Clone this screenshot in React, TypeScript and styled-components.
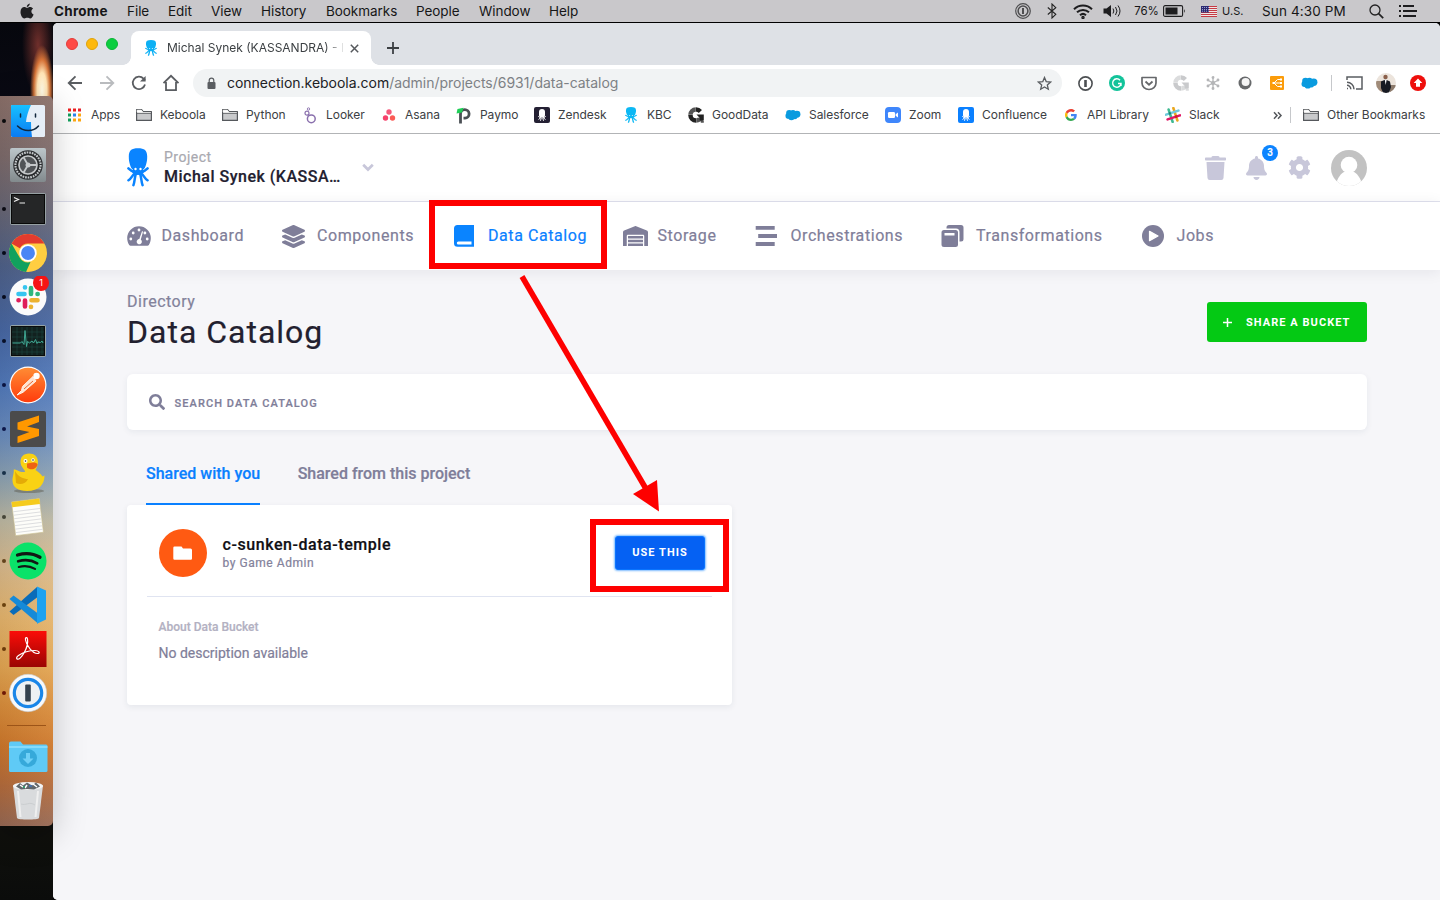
import React from 'react';
import styled, { createGlobalStyle } from 'styled-components';
import { FaLayerGroup, FaWarehouse, FaTrash, FaBell, FaCog, FaSearch } from 'react-icons/fa';

const UI = `Inter, "Liberation Sans", sans-serif`;
const APP = `Roboto, "Liberation Sans", sans-serif`;

const Global = createGlobalStyle`
  * { box-sizing: border-box; }
  html, body { margin: 0; padding: 0; overflow: hidden; }
  svg { display: block; flex: none; }
`;

const Desktop = styled.div`
  position: relative;
  width: 1440px;
  height: 900px;
  overflow: hidden;
  display: flex;
  flex-direction: column;
  background: #050507;
  font-family: ${APP};
`;

/* ---------- macOS menu bar ---------- */
const MenuBar = styled.div`
  height: 23px;
  display: flex;
  justify-content: space-between;
  background: #c9c8cb;
  border-bottom: 1px solid #000;
  font: 400 13.5px/22px ${UI};
  color: #161617;
`;
const MenuGroup = styled.div`
  display: flex;
  align-items: center;
  height: 22px;
`;
const MenuItem = styled.div<{ $w: number; $bold?: boolean; $ls?: number; $size?: number }>`
  width: ${p => p.$w}px;
  flex: none;
  white-space: nowrap;
  font-weight: ${p => (p.$bold ? 700 : 400)};
  letter-spacing: ${p => p.$ls ?? -0.05}px;
  font-size: ${p => p.$size ?? 13.5}px;
`;

/* ---------- Below the menu bar ---------- */
const Workspace = styled.div`
  flex: 1;
  min-height: 0;
  display: flex;
`;
const DockColumn = styled.div`
  width: 53px;
  flex: none;
  position: relative;
  z-index: 2;
  padding-top: 73px;
  background:
    radial-gradient(ellipse 12px 46px at 42px 68px, #fffbe8 0%, #ffe3b4 40%, rgba(240,130,60,.85) 68%, rgba(110,30,16,0) 100%),
    radial-gradient(ellipse 16px 50px at 38px 22px, rgba(130,54,48,.85) 0%, rgba(50,16,20,0) 100%),
    linear-gradient(#06070d 0, #0a0a14 90px, #14100c 700px, #0e0f0c 830px, #0b0c0b 100%);
`;
const Dock = styled.div`
  height: 730px;
  padding: 3px 0;
  border-radius: 0 5px 5px 0;
  background:
    linear-gradient(90deg, rgba(0,0,0,.06), rgba(255,255,255,.05)),
    linear-gradient(#8b7069 0, #7c6a6a 60px, #666574 115px, #4e6088 170px, #4767a3 235px, #5179ba 290px, #6a8cbd 340px,
      #8fa3b0 385px, #bcb7a1 425px, #d8b98c 470px, #e4b46d 520px, #e2a552 570px, #d98d3b 610px, #cd772b 650px, #b36b3c 690px, #966853 730px);
  box-shadow: 0 8px 34px rgba(0, 0, 0, 0.22);
`;
const DockSlot = styled.div`
  height: 44px;
  display: flex;
  align-items: center;
  gap: 3px;
  padding-left: 2px;
`;
const RunDot = styled.span<{ $c?: string }>`
  width: 4px;
  height: 4px;
  border-radius: 2px;
  background: ${p => p.$c ?? 'transparent'};
  flex: none;
`;
const DockDivider = styled.div`
  height: 20px;
  padding: 9.5px 7px 0;
  &::before { content: ''; display: block; height: 1px; background: #9c5418; }
`;

/* ---------- Browser window ---------- */
const Win = styled.div`
  flex: 1;
  min-width: 0;
  display: flex;
  flex-direction: column;
  border-radius: 5px 5px 0 5px;
  overflow: hidden;
  background: #fff;
`;
const TabStrip = styled.div`
  height: 42px;
  flex: none;
  display: flex;
  background: #dee1e6;
`;
const Lights = styled.div`
  width: 78px;
  display: flex;
  gap: 8px;
  padding: 15px 0 0 13px;
`;
const Light = styled.span<{ $c: string; $b: string }>`
  width: 12px;
  height: 12px;
  border-radius: 50%;
  background: ${p => p.$c};
  border: 1px solid ${p => p.$b};
`;
const Tab = styled.div`
  position: relative;
  width: 240px;
  height: 34px;
  margin-top: 8px;
  padding-left: 14px;
  display: flex;
  align-items: center;
  background: #fff;
  border-radius: 8px 8px 0 0;
  &::before, &::after {
    content: '';
    position: absolute;
    bottom: 0;
    width: 8px;
    height: 8px;
  }
  &::before { left: -8px; background: radial-gradient(circle at 0 0, transparent 7.5px, #fff 8px); }
  &::after { right: -8px; background: radial-gradient(circle at 100% 0, transparent 7.5px, #fff 8px); }
`;
const TabTitle = styled.div`
  width: 176px;
  margin-left: 10px;
  overflow: hidden;
  white-space: nowrap;
  font: 400 12px/16px ${UI};
  color: #3c4043;
  mask-image: linear-gradient(90deg, #000 158px, rgba(0, 0, 0, 0.15) 176px);
`;
const NewTab = styled.div`
  padding: 19px 0 0 16px;
`;
const Toolbar = styled.div`
  height: 36px;
  flex: none;
  display: flex;
  align-items: center;
`;
const IconSlot = styled.div<{ $w: number }>`
  width: ${p => p.$w}px;
  flex: none;
  display: flex;
  align-items: center;
  justify-content: center;
`;
const Omnibox = styled.div`
  width: 869px;
  height: 28px;
  flex: none;
  padding: 0 10px 0 12px;
  display: flex;
  align-items: center;
  border-radius: 14px;
  background: #f1f3f4;
  font: 400 14px/28px ${UI};
  letter-spacing: -0.02px;
  color: #202124;
`;
const Url = styled.div`
  flex: 1;
  margin-left: 9px;
  white-space: nowrap;
  span { color: #7d8185; }
`;
const BarRule = styled.span`
  width: 1px;
  height: 16px;
  background: #c6c8cb;
`;
const Bookmarks = styled.div`
  height: 33px;
  flex: none;
  display: flex;
  padding-left: 14px;
  border-bottom: 1px solid #b2b4b6;
`;
const Bookmark = styled.div<{ $w: number }>`
  width: ${p => p.$w}px;
  height: 28px;
  flex: none;
  display: flex;
  align-items: center;
  gap: 8px;
  white-space: nowrap;
  font: 400 12px/16px ${UI};
  letter-spacing: -0.04px;
  color: #3c4043;
`;

/* ---------- Web application ---------- */
const Page = styled.div`
  flex: 1;
  min-height: 0;
  background: #f6f6f9;
  -webkit-text-stroke: 0.2px;
`;
const ProjectBar = styled.div`
  height: 68px;
  padding: 0 73px 0 74px;
  display: flex;
  align-items: center;
  background: #fff;
  border-bottom: 1px solid #e1e2ee;
`;
const ProjectName = styled.div`
  width: 198px;
  margin-left: 15px;
  letter-spacing: 0.5px;
  color: #22202f;
  font: 500 16px/20px ${APP};
  small { display: block; margin-top: -1px; padding-bottom: 1px; font: 400 14px/18px ${APP}; color: #a9a9b0; }
`;
const Tools = styled.div`
  margin-left: auto;
  display: flex;
  align-items: center;
  color: #c8c7da;
`;
const BellWrap = styled.div`
  position: relative;
  margin: 0 21px 0 20px;
`;
const Badge = styled.span`
  position: absolute;
  left: 16px;
  top: -11px;
  width: 16px;
  height: 16px;
  border-radius: 8px;
  background: #0c84ff;
  color: #fff;
  text-align: center;
  font: 500 10px/16px ${APP};
`;
const Nav = styled.div`
  position: relative;
  height: 68px;
  padding-left: 74px;
  display: flex;
  align-items: center;
  background: #fff;
  box-shadow: 0 2px 14px rgba(20, 20, 50, 0.08);
`;
const NavItem = styled.div<{ $w: number; $icon: number; $active?: boolean }>`
  width: ${p => p.$w}px;
  flex: none;
  display: flex;
  align-items: center;
  white-space: nowrap;
  font: 400 16px/20px ${APP};
  letter-spacing: 0.57px;
  color: ${p => (p.$active ? '#0a80ff' : '#7f7e99')};
  span { width: ${p => p.$icon}px; flex: none; }
`;
const Content = styled.div`
  padding: 22px 73px 0 74px;
`;
const TitleRow = styled.div`
  height: 82px;
  display: flex;
  justify-content: space-between;
`;
const Crumb = styled.div`
  font: 400 16px/20px ${APP};
  letter-spacing: 0.5px;
  color: #83829b;
`;
const Title = styled.h1`
  margin: 1px 0 0;
  font: 400 32px/38px ${APP};
  letter-spacing: 1px;
  color: #22202f;
`;
const ShareButton = styled.button`
  width: 160px;
  height: 40px;
  margin-top: 10px;
  padding: 0 0 0 16px;
  display: flex;
  align-items: center;
  gap: 14px;
  border: 0;
  border-radius: 3px;
  background: #04c914;
  color: #fff;
  font: 700 11px/16px ${APP};
  letter-spacing: 1.05px;
  white-space: nowrap;
  -webkit-text-stroke: 0;
  span { padding-top: 1px; }
`;
const SearchBox = styled.div`
  height: 56px;
  padding-left: 22px;
  display: flex;
  align-items: center;
  gap: 9.5px;
  border-radius: 6px;
  background: #fff;
  box-shadow: 0 2px 6px rgba(30, 50, 80, 0.07);
  color: #7f7e99;
  font: 500 11px/18px ${APP};
  letter-spacing: 1.08px;
  span { padding-top: 3px; }
`;
const Tabs = styled.div`
  height: 75px;
  padding-left: 19px;
  display: flex;
  align-items: flex-end;
  gap: 37.5px;
`;
const PageTab = styled.div<{ $active?: boolean }>`
  height: 43px;
  font: 500 16px/23px ${APP};
  color: ${p => (p.$active ? '#0a80ff' : '#7f7e99')};
  border-bottom: 2px solid ${p => (p.$active ? '#0a80ff' : 'transparent')};
`;
const Card = styled.div`
  width: 605px;
  height: 200px;
  padding: 0 20px;
  border-radius: 4px;
  background: #fff;
  box-shadow: 0 2px 6px rgba(30, 50, 80, 0.08);
`;
const CardHead = styled.div`
  height: 92px;
  padding: 4px 7px 0 12px;
  display: flex;
  align-items: center;
  border-bottom: 1px solid #e0e4f1;
`;
const BucketIcon = styled.div`
  width: 48px;
  height: 48px;
  border-radius: 24px;
  display: flex;
  align-items: center;
  justify-content: center;
  background: #ff5a12;
`;
const BucketName = styled.div`
  flex: 1;
  margin-left: 15.5px;
  font: 500 16px/20px ${APP};
  letter-spacing: 0.56px;
  color: #111014;
  small { display: block; font: 400 12px/16px ${APP}; letter-spacing: 0.55px; color: #83829b; }
`;
const UseButton = styled.button`
  width: 90px;
  height: 34px;
  padding: 1px 0 0;
  border: 1px solid #0a74ff;
  border-radius: 3px;
  background: #0561f3;
  box-shadow: 0 0 2px 1px #7ebcff;
  color: #fff;
  font: 700 11px/16px ${APP};
  letter-spacing: 1.05px;
  -webkit-text-stroke: 0;
`;
const About = styled.div`
  padding: 21px 12px 21px 11.5px;
  font: 500 12px/18px ${APP};
  color: #b3b1c2;
  p { margin: 8px 0 0; font: 400 14px/19px ${APP}; color: #7f7e99; }
`;

/* ---------- Annotations lying over the window ---------- */
const Highlight = styled.div<{ $x: number; $y: number; $w: number; $h: number }>`
  position: absolute;
  z-index: 4;
  left: ${p => p.$x}px;
  top: ${p => p.$y}px;
  width: ${p => p.$w}px;
  height: ${p => p.$h}px;
  border: 6px solid #fe0000;
`;
const ArrowLayer = styled.svg`
  position: absolute;
  z-index: 4;
  left: 510px;
  top: 270px;
`;

/* ---------- Drawings ---------- */
const Octopus = ({ w, h, color, eye = '#fff' }: { w: number; h: number; color: string; eye?: string }) => (
  <svg width={w} height={h} viewBox="0 0 22 39" preserveAspectRatio="none">
    <path d="M1.800 8.500C1.800 2.500 4.500.3 11 .3s9.200 2.200 9.200 8.200c0 3.500-.4 5.500-1.200 8.300-.7 2.700-1.700 4.200-3.200 5.200H6.200c-1.500-1-2.500-2.500-3.200-5.200C2.200 14 1.800 12 1.800 8.500Z" fill={color} />
    <ellipse cx="11" cy="23.500" rx="6" ry="3.600" fill={color} />
    <g stroke={color} strokeWidth="2.500" fill="none" strokeLinecap="round">
      <path d="M1.400 20.300C3 22 5 23.500 8 24M20.600 20.300C19 22 17 23.500 14 24" />
      <path d="M1.400 32.300C4.500 31 4.500 27.500 8 25.500M20.600 32.300C17.500 31 17.500 27.500 14 25.500" />
      <path d="M6.400 37.200C7.800 34 7.500 29 9 25.500M15.600 37.200C14.200 34 14.500 29 13 25.500" />
    </g>
    <circle cx="8.500" cy="21" r="1.200" fill={eye} /><circle cx="13.500" cy="21" r="1.200" fill={eye} />
  </svg>
);
const OctoTile = ({ bg }: { bg: string }) => (
  <svg width="16" height="16" viewBox="0 0 16 16">
    <rect width="16" height="16" rx="2" fill={bg} />
    <path d="M5 5c0-2 1-3 3-3s3 1 3 3v3c0 1-.5 2-1 2.500H6C5.500 10 5 9 5 8Z" fill="#fff" />
    <path d="M4.300 9.300c1 1.500 2 1.200 3 1.200M11.700 9.300c-1 1.500-2 1.200-3 1.200M4.500 12.500l2.500-2M11.500 12.500l-2.500-2M6.500 13.800l.8-3M9.500 13.800l-.8-3" stroke="#fff" fill="none" />
  </svg>
);
const Gauge = () => (
  <svg width="24" height="20" viewBox="0 0 24 20">
    <path d="M12 .3A11.800 11.800 0 0 0 .2 12c0 2.600.7 5 2 7 .3.500.8.700 1.300.700h17c.5 0 1-.2 1.300-.700 1.300-2 2-4.400 2-7A11.800 11.800 0 0 0 12 .3Z" fill="#7f7e99" />
    <g fill="#fff"><circle cx="3.800" cy="13" r="1.400" /><circle cx="6.200" cy="7" r="1.400" /><circle cx="12" cy="4" r="1.400" /><circle cx="17.900" cy="7" r="1.400" /><circle cx="20.200" cy="13" r="1.400" /><path d="M15 5.200l1.100.4-2.300 8a2.600 2.600 0 1 1-1.500-.5Z" /></g>
  </svg>
);
const Folder = () => (
  <svg width="16" height="14" viewBox="0 0 16 14">
    <path d="M.6 12.400V1.600h5l1.500 2h8.300v8.800Z" fill="#c9cacc" stroke="#55585c" strokeWidth="1.200" strokeLinejoin="round" />
    <path d="M1.200 2.200h4.100l1.300 1.700H1.200ZM1.200 4.600h13.600" fill="#fff" stroke="#fff" strokeWidth=".8" />
    <path d="M1 5.400h14" stroke="#55585c" strokeWidth=".8" />
  </svg>
);
const Cloud = ({ w = 17, h = 12 }: { w?: number; h?: number }) => (
  <svg width={w} height={h} viewBox="0 0 17 12">
    <g fill="#0a9bdf"><circle cx="4.500" cy="4" r="3.300" /><circle cx="8.500" cy="3.800" r="3" /><circle cx="12.700" cy="5.200" r="3.700" /><circle cx="3.500" cy="7" r="3" /><circle cx="6.800" cy="8.200" r="3.400" /><circle cx="10.500" cy="7.600" r="2.800" /></g>
  </svg>
);
const GoogleG = () => (
  <svg width="16" height="14" viewBox="-4 -4 56 56">
    <path fill="#ea4335" d="M24 9.500c3.500 0 6.700 1.200 9.200 3.600l6.900-6.900C35.900 2.400 30.500 0 24 0 14.600 0 6.500 5.400 2.600 13.200l8 6.200C12.400 13.700 17.700 9.500 24 9.500z" />
    <path fill="#4285f4" d="M47 24.500c0-1.600-.2-3.100-.4-4.500H24v9h12.900c-.6 3-2.200 5.500-4.700 7.200l7.700 6C44.400 38 47 31.800 47 24.500z" />
    <path fill="#fbbc05" d="M10.500 28.600c-.5-1.500-.8-3-.8-4.600s.3-3.100.8-4.600l-8-6.200C.9 16.500 0 20.100 0 24s.9 7.500 2.600 10.800z" />
    <path fill="#34a853" d="M24 48c6.500 0 11.900-2.100 15.900-5.800l-7.700-6c-2.200 1.500-4.900 2.300-8.200 2.300-6.300 0-11.600-4.200-13.500-9.900l-8 6.200C6.500 42.600 14.600 48 24 48z" />
  </svg>
);
const GoodG = ({ c = ['#222', '#555'] }: { c?: string[] }) => (
  <svg width="16" height="16" viewBox="0 0 16 16">
    <path d="M14 3A7.800 7.800 0 0 0 8 .2v4.500c1 0 2 .5 2.800 1.300Z" fill={c[0]} />
    <path d="M7.800.2A7.800 7.800 0 0 0 .2 7.800h4.500A3.300 3.300 0 0 1 7.800 4.700Z" fill={c[1]} />
    <path d="M.2 8h4.500a3.300 3.300 0 0 0 3.300 3.300v4.500A7.800 7.800 0 0 1 .2 8Z" fill={c[0]} />
    <path d="M8.200 15.800v-4.500L10.500 10.500 15.800 14V15.800h-3v-1.500a8 8 0 0 1-4.600 1.500Z" fill={c[1]} /><path d="M8.500 7.500h7.300v6h-4l-.5-3Z" fill={c[0]} />
  </svg>
);
const AppsGrid = () => (
  <svg width="16" height="14" viewBox="-1 -.5 16 14">
    {['#f01d1d', '#f01d1d', '#e8242c', '#12a05c', '#2a85f0', '#ffa812', '#12a05c', '#ffa812', '#ffa812'].map((c, i) => (
      <rect key={i} x={(i % 3) * 5} y={Math.floor(i / 3) * 5} width="3" height="3" fill={c} />
    ))}
  </svg>
);
const SlackHash = ({ s = 16 }: { s?: number }) => (
  <svg width={s} height={s} viewBox="0 0 16 16">
    <g strokeWidth="2.600" strokeLinecap="round" transform="rotate(-18 8 8)">
      <path d="M5.500 1.500v13" stroke="#3eb991" /><path d="M10.500 1.500v13" stroke="#e9a820" /><path d="M1.500 5.500h13" stroke="#6ecadc" /><path d="M1.500 10.500h13" stroke="#e01765" />
      <path d="M5.500 5.400v.2" stroke="#1f8a70" /><path d="M10.500 10.400v.2" stroke="#cc2027" />
    </g>
  </svg>
);
const Looker = () => (
  <svg width="16" height="17" viewBox="0 0 16 17" fill="none" stroke="#8a70ad">
    <circle cx="9.300" cy="11.800" r="3.900" strokeWidth="1.500" /><circle cx="5" cy="6.200" r="2" strokeWidth="1.200" /><circle cx="6.500" cy="2" r="1.200" strokeWidth=".9" /><path d="M6.300 7.700l1.200 1.200" />
  </svg>
);
const Asana = () => (
  <svg width="16" height="16" viewBox="0 0 16 16"><circle cx="8" cy="5" r="2.700" fill="#f5587b" /><circle cx="4.500" cy="11" r="2.700" fill="#f6416b" /><circle cx="11.500" cy="11" r="2.700" fill="#fb5b55" /></svg>
);
const Paymo = () => (
  <svg width="16" height="17" viewBox="0 0 16 17" fill="none">
    <path d="M4.500 16.500V7A4.300 4.300 0 1 1 9 11.200H7.500" stroke="#4b5055" strokeWidth="2.800" /><path d="M.5 6.500 1.500 2l6-1.200L6 5.500Z" fill="#1fce56" />
  </svg>
);
const ZoomIcon = () => (
  <svg width="16" height="16" viewBox="0 0 16 16"><rect width="16" height="16" rx="4" fill="#3f86fb" /><rect x="3" y="5" width="7" height="6" rx="1.300" fill="#fff" /><path d="M10.600 7.300 13 5.600v4.800l-2.400-1.700Z" fill="#fff" /></svg>
);

const bookmarks: [string, number, React.ReactNode][] = [
  ['Apps', 69, <AppsGrid />],
  ['Keboola', 86, <Folder />],
  ['Python', 80, <Folder />],
  ['Looker', 79, <Looker />],
  ['Asana', 75, <Asana />],
  ['Paymo', 78, <Paymo />],
  ['Zendesk', 89, <OctoTile bg="#242033" />],
  ['KBC', 65, <svg width="16" height="16" viewBox="0 0 16 16"><svg x="2" width="12" height="16"><Octopus w={12} h={16} color="#0cb8f4" /></svg></svg>],
  ['GoodData', 97, <GoodG />],
  ['Salesforce', 100, <Cloud w={16} h={12} />],
  ['Zoom', 73, <ZoomIcon />],
  ['Confluence', 105, <OctoTile bg="#0b80ff" />],
  ['API Library', 102, <GoogleG />],
  ['Slack', 108, <SlackHash />],
];

const stroke = { fill: 'none', stroke: '#5a5d61', strokeWidth: 1.8 } as const;

const DockIcon = ({ name }: { name: string }) => {
  const S = (children: React.ReactNode) => <svg width="38" height="42" viewBox="0 -2 38 42">{children}</svg>;
  switch (name) {
    case 'finder':
      return S(<>
        <defs><linearGradient id="fnd" x2="0" y2="1"><stop stopColor="#16c0ff" /><stop offset="1" stopColor="#0b7bf2" /></linearGradient></defs>
        <rect x="2" y="3" width="34" height="32" rx="1.500" fill="#e6eef7" />
        <path d="M3.500 3H22c-3 6-4.500 12-5 17h5c0 5 .2 10 1 15H3.500C2.500 35 2 34 2 33.500V4.500C2 3.500 2.500 3 3.500 3Z" fill="url(#fnd)" />
        <path d="M8.500 24c6 6 16 6 21 0" stroke="#12283e" strokeWidth="1.500" fill="none" strokeLinecap="round" />
        <path d="M11.500 12v3M26.500 12v3" stroke="#12283e" strokeWidth="1.500" strokeLinecap="round" />
      </>);
    case 'prefs':
      return S(<>
        <defs><linearGradient id="prf" x2="0" y2="1"><stop stopColor="#bcc6ca" /><stop offset="1" stopColor="#828a8d" /></linearGradient></defs>
        <rect x="1" y="2" width="36" height="34" rx="2" fill="url(#prf)" />
        <circle cx="19" cy="19" r="14.800" fill="#303235" />
        <circle cx="19" cy="19" r="12.500" fill="none" stroke="#c6cacc" strokeWidth="2.200" strokeDasharray="1.600 1" />
        <circle cx="19" cy="19" r="10.500" fill="#505356" stroke="#26282a" strokeWidth="1.500" />
        <circle cx="19" cy="19" r="9" fill="none" stroke="#c4c7c9" strokeWidth="1.600" />
        <path d="M19 19h9M19 19l-4.500-7.800M19 19l-4.500 7.800" stroke="#c4c7c9" strokeWidth="1.800" /><circle cx="19" cy="19" r="2.500" fill="#c4c7c9" />
      </>);
    case 'terminal':
      return S(<>
        <rect x="1" y="3" width="36" height="32" rx="2" fill="#96a0a3" /><rect x="2.500" y="4.500" width="33" height="29" fill="#252627" stroke="#080808" />
        <path d="M5 7.500l4.500 2L5 11.500M10.500 13H16" stroke="#eee" strokeWidth="1.200" fill="none" />
      </>);
    case 'chrome':
      return S(<>
        <circle cx="19" cy="19" r="19" fill="#ffce41" />
        <path d="M19 0A19 19 0 0 1 35.500 9.500H19a9.500 9.500 0 0 0-8.200 4.700L2.500 9.500A19 19 0 0 1 19 0Z" fill="#e33b2e" />
        <path d="M2.500 9.500 10.800 23.800A9.500 9.500 0 0 0 19 28.500l2.500-.4L17 38A19 19 0 0 1 2.500 9.500Z" fill="#11a15e" />
        <circle cx="19" cy="19" r="8.700" fill="#fff" /><circle cx="19" cy="19" r="6.900" fill="#4a86f5" />
      </>);
    case 'slack':
      return (
        <svg width="44" height="42" viewBox="0 -2 44 42">
          <circle cx="19" cy="19" r="18.500" fill="#fbfbfb" />
          <g strokeWidth="4.600" strokeLinecap="round">
            <path d="M9.500 16h6M16 9.300v.2" stroke="#36c5f0" /><path d="M22 10v6M28.500 16h.2" stroke="#2eb67d" />
            <path d="M22.500 22.300h6M22 28.700v.2" stroke="#ecb22e" /><path d="M16 22.500v6M9.500 22.300h.2" stroke="#e01e5a" />
          </g>
          <circle cx="32" cy="5" r="8" fill="#f51414" />
          <text x="32" y="8.200" fontSize="9" fill="#fff" textAnchor="middle" fontFamily="Inter, sans-serif">1</text>
        </svg>
      );
    case 'activity':
      return S(<>
        <rect x="1" y="3" width="36" height="32" rx="2" fill="#94a3a5" /><rect x="2.500" y="4.500" width="33" height="29" fill="#12211f" stroke="#0a0c0c" />
        <path d="M3 10h32M3 15h32M3 20h32M3 25h32M3 30h32M8 5v28M13 5v28M18 5v28M23 5v28M28 5v28M33 5v28" stroke="#1d4742" strokeWidth=".6" />
        <path d="M3.500 21h8l1.500-1.500 2 3 1-14 1.500 16 1-5 2 1.500 2.500-2 1.500 2 2-3.500 1.500 4 1-1.500 2.500.5L33 19l1 2" stroke="#3fa893" strokeWidth="1" fill="none" />
      </>);
    case 'postman':
      return S(<>
        <defs><linearGradient id="pst" x2="0" y2="1"><stop stopColor="#ff8c34" /><stop offset="1" stopColor="#ff3c0c" /></linearGradient></defs>
        <circle cx="19" cy="19" r="18.500" fill="#fff" /><circle cx="19" cy="19" r="17.300" fill="url(#pst)" />
        <path d="M24 10.500 13.500 20.500 12.500 24.500 8 29l6-2.700L27 15Z" fill="#ffe3d1" stroke="#fff3ea" /><path d="M15 23l9-8" stroke="#e25a21" strokeWidth=".9" /><circle cx="27.500" cy="10" r="3.200" fill="#fff" />
      </>);
    case 'sublime':
      return S(<>
        <rect x="1" y="1" width="36" height="36" rx="2" fill="#4b4b4b" />
        <path d="M8.500 12.500 30 5.500V12l-12 4.500 12 2.500v7L8.500 33v-6.500L20.500 22 8.500 19.500Z" fill="#ff9800" />
      </>);
    case 'duck':
      return S(<>
        <ellipse cx="20" cy="37" rx="15" ry="2" fill="rgba(70,60,40,.35)" />
        <path d="M11.500 8C11.500 3 14.500-.5 20-.5s9 3.300 9 8.500c0 3.500-1.500 6-2.500 8 3 2 5 3.500 7 6.500l2-1c0 9-5.500 15.500-17.500 15.500-9 0-14.500-4-14.500-10.500 0-4 1.300-5.500 1.300-11C8.500 15.500 10 18.500 16 18c.5-2-4.500-5-4.500-10Z" fill="#f9d214" />
        <path d="M6 17c3 6 9 8 13 8-2 5-8 6-12 4Z" fill="#e4ab07" /><path d="M18 9.500c3 0 7-2.500 10.500.5 0 5-7 7-10.500 3.500Z" fill="#ef6212" />
        <circle cx="16.500" cy="7" r="2" fill="#fff" /><circle cx="24" cy="6" r="1.700" fill="#fff" /><circle cx="16.500" cy="7" r=".8" fill="#222" /><circle cx="24" cy="6" r=".8" fill="#222" />
      </>);
    case 'notes':
      return S(<g transform="rotate(-7 19 19)">
        <rect x="4.500" y="2" width="28" height="34" fill="#fdfdf9" stroke="#c9bd90" strokeWidth=".6" /><rect x="4.500" y="2" width="28" height="5.500" fill="#f5cb1c" />
        <path d="M5 12h27M5 15.500h27M5 19h27M5 22.500h27M5 26h27M5 29.500h27M5 33h27" stroke="#d7d8da" strokeWidth=".8" />
      </g>);
    case 'spotify':
      return S(<>
        <circle cx="19" cy="19" r="18.500" fill="#0ae269" />
        <path d="M8.500 13c8-2.300 16-1.500 22.500 2.200" stroke="#121614" strokeWidth="3.300" strokeLinecap="round" fill="none" />
        <path d="M9.200 19.300c7-2 13.500-1.200 19 2" stroke="#121614" strokeWidth="2.700" strokeLinecap="round" fill="none" />
        <path d="M9.800 25c6-1.500 11.500-.8 16.200 1.900" stroke="#121614" strokeWidth="2.200" strokeLinecap="round" fill="none" />
      </>);
    case 'vscode':
      return S(<>
        <path d="M28 1 .5 25.500 4.500 29 28 11.500Z" fill="#0a6cb9" />
        <path d="M.5 13 4.500 9.500 29 27.500V37.500Z" fill="#168ad8" /><path d="M28 .5 37 4.500V33.500L28 37.700Z" fill="#1ea2ef" />
      </>);
    case 'acrobat':
      return S(<>
        <defs><linearGradient id="acr" x2="0" y2="1"><stop stopColor="#fb0d08" /><stop offset="1" stopColor="#9a0503" /></linearGradient></defs>
        <rect x=".5" y="1" width="37" height="36" fill="url(#acr)" />
        <path d="M8 29c3.500 2 12-12 10.500-20-.5-2.500-2.500-1.500-2 1 .8 5 7 14 12.500 13.500 2.500-.5 1-3-3-3-5 0-12 2-16.500 5-1.500 1-2.500 2.500-1.500 3.500Z" fill="none" stroke="#fff" strokeWidth="1.200" />
      </>);
    case 'onepw':
      return S(<>
        <circle cx="19" cy="19" r="18.700" fill="#f8f9fa" stroke="#c6cbd0" strokeWidth=".6" />
        <circle cx="19" cy="19" r="13.700" fill="#eef1f3" stroke="#1a86e8" strokeWidth="3.200" />
        <rect x="16.200" y="10.500" width="5.600" height="17" rx="1" fill="#34424e" />
      </>);
    case 'downloads':
      return (
        <svg width="40" height="42" viewBox="1 -2 40 42">
          <path d="M1 5.500q0-2 2-2h9.500l2.500 3H38q1.500 0 1.500 1.500v24.500q0 1.500-1.500 1.500H2.500Q1 34 1 32.500Z" fill="#5fcaf6" /><path d="M1 9h38.500" stroke="#93e0fd" strokeWidth="1.300" />
          <circle cx="20" cy="20" r="9" fill="#36a9da" /><path d="M18 15h4v5.500h3.500L20 26l-5.500-5.500H18Z" fill="#6fd0f7" />
        </svg>
      );
    default:
      return S(<>
        <path d="M4 3.500 8 36c.3 2 21.700 2 22 0l4-32.500Z" fill="#d9dbdd" /><path d="M9 9l2.500 26M29 9l-2.500 26" stroke="#efefef" strokeWidth="2" />
        <path d="M12 22c5 2 8-3 14 1" stroke="#cbced0" fill="none" />
        <ellipse cx="19" cy="4" rx="15" ry="4" fill="#f2f3f4" /><path d="M7 4.500 11 1l3 2.500L18 .5l5 3 4-3 4 4-6 3-7-.5-6 .5Z" fill="#60666a" />
        <path d="M11 3l3 2M24 2l4 3M18 3l-2 3" stroke="#fff" strokeWidth="1.500" /><path d="M20 4h3" stroke="#4a6fa5" strokeWidth="2" /><path d="M14 5h2" stroke="#23a56b" strokeWidth="1.500" />
      </>);
  }
};

const dock: [string, string?][] = [
  ['finder', '#0a0a0c'], ['prefs'], ['terminal', '#0a0a12'], ['chrome', '#060a18'], ['slack', '#060a1c'], ['activity', '#081028'],
  ['postman', '#0a1440'], ['sublime', '#0c1648'], ['duck', '#183148'], ['notes', '#454538'], ['spotify', '#63431c'], ['vscode', '#6a420e'],
  ['acrobat', '#6b3a0a'], ['onepw', '#6e1806'],
];

const menus: [string, number][] = [
  ['File', 41], ['Edit', 43], ['View', 50], ['History', 65], ['Bookmarks', 90], ['People', 63], ['Window', 70], ['Help', 40],
];

export default function App() {
  return (
    <Desktop>
      <Global />
      <MenuBar>
        <MenuGroup>
          <IconSlot $w={54}>
            <svg width="14" height="17" viewBox="0 0 14 17" fill="#202022">
              <path d="M9.800.5c.1 1.700-1.300 3.400-3 3.500C6.600 2.300 8.200.7 9.800.5ZM7 4.800c.8 0 1.700-.8 3.100-.8 1.200 0 2.300.6 3 1.600-2.500 1.600-2.100 4.900.5 5.900-.7 1.900-2 4-3.400 4-1.100 0-1.500-.7-2.900-.7s-1.800.7-2.900.7C2.400 15.500.5 12 .5 9c0-3.300 1.900-5 3.800-5C5.500 4 6.300 4.800 7 4.800Z" />
            </svg>
          </IconSlot>
          <MenuItem $w={73} $bold $ls={0.25}>Chrome</MenuItem>
          {menus.map(([t, w]) => <MenuItem key={t} $w={w}>{t}</MenuItem>)}
        </MenuGroup>
        <MenuGroup>
          <IconSlot $w={16}>
            <svg width="16" height="16" viewBox="0 0 16 16" fill="none" stroke="#4e4e50"><circle cx="8" cy="8" r="7.300" strokeWidth="1.200" /><circle cx="8" cy="8" r="4.900" strokeWidth="1.500" /><path d="M8 5v6" strokeWidth="2" /></svg>
          </IconSlot>
          <IconSlot $w={42}>
            <svg width="10" height="16" viewBox="0 0 10 16" fill="none" stroke="#222" strokeWidth="1.100"><path d="M.8 4.500l8 6.800L5 15V1l3.800 3.700L.8 11.500" /></svg>
          </IconSlot>
          <IconSlot $w={20}>
            <svg width="20" height="15" viewBox="0 0 20 15" fill="none" stroke="#1d1d1f" strokeWidth="2"><path d="M1 5.200a13 13 0 0 1 18 0M4 8.300a8.700 8.700 0 0 1 12 0M7 11.200a4.600 4.600 0 0 1 6 0" /><circle cx="10" cy="13.500" r=".7" /></svg>
          </IconSlot>
          <IconSlot $w={38}>
            <svg width="18" height="14" viewBox="0 0 18 14"><path d="M.5 4.500h3L8 1v12L3.500 9.500h-3Z" fill="#1d1d1f" /><path d="M10 4.500q1.700 2.500 0 5M12.500 3q3 4 0 8M15 1.500q4 5.500 0 11" fill="none" stroke="#1d1d1f" /></svg>
          </IconSlot>
          <MenuItem $w={32} $ls={-0.05} $size={11.5}>&nbsp;76%</MenuItem>
          <IconSlot $w={24}>
            <svg width="24" height="12" viewBox="0 0 24 12"><rect x=".6" y=".6" width="19" height="10.800" rx="1.500" fill="none" stroke="#1d1d1f" strokeWidth="1.100" /><rect x="2.500" y="2.500" width="12" height="7" fill="#1d1d1f" /><path d="M21 4v4q1.800-2 0-4" fill="#1d1d1f" /></svg>
          </IconSlot>
          <IconSlot $w={9} />
          <IconSlot $w={26}>
            <svg width="16" height="11" viewBox="0 0 16 11"><rect width="16" height="11" fill="#efe6e6" /><path d="M0 .5h16M0 2.500h16M0 4.500h16M0 6.500h16M0 8.500h16M0 10.500h16" stroke="#c53a44" /><rect width="8" height="6.500" fill="#2a2a72" /><path d="M1 1.500h7M1 3.500h7M1 5.200h7" stroke="#bdbde0" strokeWidth=".8" strokeDasharray="1 1" /></svg>
          </IconSlot>
          <MenuItem $w={40} $size={11} $ls={0.1}>U.S.</MenuItem>
          <MenuItem $w={106} $ls={0.12}>Sun 4:30 PM</MenuItem>
          <IconSlot $w={16}>
            <svg width="15" height="15" viewBox="0 0 15 15" fill="none" stroke="#222" strokeWidth="1.300"><circle cx="6" cy="6" r="5" /><path d="M9.600 9.600l4.600 4.600" strokeWidth="1.700" /></svg>
          </IconSlot>
          <IconSlot $w={48}>
            <svg width="18" height="12" viewBox="0 0 18 12" stroke="#1d1d1f" strokeWidth="1.900"><path d="M0 1h2M4 1h11M0 6h2M4 6h14M0 11h2M4 11h13" /></svg>
          </IconSlot>
          <IconSlot $w={8} />
        </MenuGroup>
      </MenuBar>

      <Workspace>
        <DockColumn>
          <Dock>
            {dock.map(([n, c]) => <DockSlot key={n}><RunDot $c={c} /><DockIcon name={n} /></DockSlot>)}
            <DockDivider />
            <DockSlot><RunDot /><DockIcon name="downloads" /></DockSlot>
            <DockSlot><RunDot /><DockIcon name="bin" /></DockSlot>
          </Dock>
        </DockColumn>

        <Win>
          <TabStrip>
            <Lights>
              <Light $c="#fe4a46" $b="#e33e3b" /><Light $c="#fdb90e" $b="#e0a30c" /><Light $c="#0bce40" $b="#0bb537" />
            </Lights>
            <Tab>
              <Octopus w={12} h={16} color="#0cb0f4" />
              <TabTitle>Michal Synek (KASSANDRA) - I</TabTitle>
              <svg width="9" height="9" viewBox="0 0 9 9" style={{ marginLeft: 7 }}><path d="M.8.8l7.400 7.400M8.200.8.800 8.200" stroke="#55585c" strokeWidth="1.500" /></svg>
            </Tab>
            <NewTab><svg width="12" height="12" viewBox="0 0 12 12"><path d="M6 0v12M0 6h12" stroke="#3c4043" strokeWidth="1.800" /></svg></NewTab>
          </TabStrip>

          <Toolbar>
            <IconSlot $w={6} />
            <IconSlot $w={32}><svg width="16" height="16" viewBox="0 0 16 16" {...stroke}><path d="M15 8H2M8.500 1.300 1.700 8l6.800 6.700" /></svg></IconSlot>
            <IconSlot $w={32}><svg width="16" height="16" viewBox="0 0 16 16" {...stroke} stroke="#b9bbbe"><path d="M1 8h13M7.500 1.300 14.300 8l-6.800 6.700" /></svg></IconSlot>
            <IconSlot $w={32}><svg width="16" height="16" viewBox="0 0 16 16" {...stroke}><path d="M14 9.500A6.200 6.200 0 1 1 12.500 3.600L14 5.300" /><path d="M14.600 1v5.600H9Z" fill="#5a5d61" stroke="none" /></svg></IconSlot>
            <IconSlot $w={32}><svg width="18" height="18" viewBox="0 0 18 18" {...stroke}><path d="M1.500 9.200 9 1.800l7.500 7.400M4 8v8.200h10V8" /></svg></IconSlot>
            <IconSlot $w={6} />
            <Omnibox>
              <svg width="13" height="13" viewBox="0 0 13 13"><rect x="2.500" y="5" width="8" height="7" rx="1" fill="#5a5d61" /><path d="M4.200 5V3.500a2.300 2.300 0 0 1 4.600 0V5" fill="none" stroke="#5a5d61" strokeWidth="1.200" /></svg>
              <Url>connection.keboola.com<span>/admin/projects/6931/data-catalog</span></Url>
              <svg width="15" height="15" viewBox="0 0 15 15" fill="none" stroke="#5a5d61" strokeWidth="1.300"><path d="M7.500 1.500l1.700 4.100 4.400.4-3.300 2.900 1 4.300-3.800-2.300-3.800 2.300 1-4.300L1.400 6l4.400-.4Z" /></svg>
            </Omnibox>
            <IconSlot $w={7} />
            <IconSlot $w={32}><svg width="15" height="15" viewBox="0 0 15 15" fill="none" stroke="#4c4f52"><circle cx="7.500" cy="7.500" r="6.600" strokeWidth="1.600" /><path d="M7.500 4v7" strokeWidth="2.600" /></svg></IconSlot>
            <IconSlot $w={32}><svg width="16" height="16" viewBox="0 0 16 16"><circle cx="8" cy="8" r="8" fill="#12c39a" /><path d="M11 5.200A4.200 4.200 0 1 0 12 8.500H9M12 8v3" fill="none" stroke="#fff" strokeWidth="1.400" /></svg></IconSlot>
            <IconSlot $w={32}><svg width="16" height="15" viewBox="0 0 16 15" fill="none" stroke="#66686b"><path d="M1 1.500h14V7a7 6.500 0 0 1-14 0Z" strokeWidth="1.700" strokeLinejoin="round" /><path d="M4.500 5.500 8 8.700l3.500-3.200" strokeWidth="1.800" /></svg></IconSlot>
            <IconSlot $w={32}><GoodG c={['#c9cacc', '#dbdcdd']} /></IconSlot>
            <IconSlot $w={32}><svg width="14" height="14" viewBox="0 0 14 14" stroke="#b5b6b8" strokeWidth="1.300" fill="#b5b6b8"><path d="M7 1v12M1.500 4l11 6M12.500 4l-11 6" /><circle cx="7" cy="7" r="1.500" />{[[7, 1.5], [7, 12.5], [2, 4], [12, 4], [2, 10], [12, 10]].map(([x, y], i) => <circle key={i} cx={x} cy={y} r=".8" />)}</svg></IconSlot>
            <IconSlot $w={32}><svg width="14" height="14" viewBox="0 0 14 14"><circle cx="7" cy="7" r="6.500" fill="#67696b" /><circle cx="7.600" cy="6" r="4" fill="#f5f5f5" /></svg></IconSlot>
            <IconSlot $w={32}><svg width="14" height="14" viewBox="0 0 14 14"><rect width="14" height="14" rx="1" fill="#fb9c0b" /><path d="M10.500 3.500H7.500L4 7l3.500 3.500h3M4 7h6.500" stroke="#fff" fill="none" /><path d="M10 2.500h2v2h-2zM10 6h2v2h-2zM10 9.500h2v2h-2zM2.500 6h2v2h-2z" fill="#fff" /></svg></IconSlot>
            <IconSlot $w={32}><Cloud /></IconSlot>
            <IconSlot $w={13}><BarRule /></IconSlot>
            <IconSlot $w={32}><svg width="17" height="14" viewBox="0 0 17 14" fill="none" stroke="#5a5d61" strokeWidth="1.500"><path d="M1 4V1h15v12h-6M1 12.500h1M1 9.300a3.800 3.800 0 0 1 3.800 3.900M1 6.300a7 7 0 0 1 7 6.900" /></svg></IconSlot>
            <IconSlot $w={32}>
              <svg width="20" height="20" viewBox="0 0 20 20"><defs><clipPath id="pf"><circle cx="10" cy="10" r="10" /></clipPath></defs><g clipPath="url(#pf)"><rect width="20" height="20" fill="#ece4dc" /><rect y="8" width="6" height="12" fill="#a08b79" /><rect x="14" y="12" width="6" height="8" fill="#8c7a6c" /><circle cx="9.500" cy="4" r="2.200" fill="#8a5f4a" /><path d="M5 8.500 9.500 6.500 14 8.500 15 14l-2 6H7l-2-5Z" fill="#171a22" /><path d="M8.700 6.500h2L9.700 12Z" fill="#fff" /></g></svg>
            </IconSlot>
            <IconSlot $w={32}><svg width="16" height="16" viewBox="0 0 16 16"><circle cx="8" cy="8" r="8" fill="#ee0f0c" /><path d="M8 3.500 12.300 8H10v3.800H6V8H3.700Z" fill="#fff" /></svg></IconSlot>
          </Toolbar>

          <Bookmarks>
            {bookmarks.map(([t, w, icon]) => <Bookmark key={t} $w={w}>{icon}{t}</Bookmark>)}
            <Bookmark $w={17}>
              <svg width="10" height="9" viewBox="0 0 10 9" fill="none" stroke="#55585c" strokeWidth="1.500"><path d="M1 1.300l3 3.200-3 3.200M5 1.300l3 3.200-3 3.200" /></svg>
            </Bookmark>
            <Bookmark $w={13}><BarRule /></Bookmark>
            <Bookmark $w={125}><Folder />Other Bookmarks</Bookmark>
          </Bookmarks>

          <Page>
            <ProjectBar>
              <Octopus w={22} h={39} color="#0a84ff" />
              <ProjectName><small>Project</small>Michal Synek (KASSA…</ProjectName>
              <svg width="12" height="9" viewBox="0 0 12 9"><path d="M1.200 1.700 6 6.500l4.800-4.800" fill="none" stroke="#c8c7da" strokeWidth="2.700" /></svg>
              <Tools>
                <FaTrash size={24} style={{ width: 21 }} />
                <BellWrap><FaBell size={24} style={{ width: 21 }} /><Badge>3</Badge></BellWrap>
                <FaCog size={23} />
                <svg width="36" height="36" viewBox="0 0 36 36" style={{ marginLeft: 20 }}>
                  <defs><clipPath id="av"><circle cx="18" cy="18" r="18" /></clipPath></defs>
                  <g clipPath="url(#av)"><rect width="36" height="36" fill="#c2c2c2" /><circle cx="18" cy="15" r="8.300" fill="#fff" /><path d="M4.500 36C6.500 27 10 23.500 14 21.500h8c4 2 7.500 5.500 9.500 14.500Z" fill="#fff" /></g>
                </svg>
              </Tools>
            </ProjectBar>
            <Nav>
              <NavItem $w={155} $icon={34.5}><span><Gauge /></span>Dashboard</NavItem>
              <NavItem $w={172} $icon={35}><span><FaLayerGroup size={23} /></span>Components</NavItem>
              <NavItem $w={169} $icon={34} $active>
                <span><svg width="20" height="22" viewBox="0 0 20 22"><path d="M3.500 0H20v21.800H3.500A3.500 3.500 0 0 1 0 18.300V3.500A3.500 3.500 0 0 1 3.500 0Z" fill="#0a84ff" /><path d="M4.300 16.500H17.500v3H4.300a1.500 1.500 0 0 1 0-3Z" fill="#fff" /></svg></span>
                Data Catalog
              </NavItem>
              <NavItem $w={132} $icon={34.5}><span><FaWarehouse size={25} style={{ height: 20 }} /></span>Storage</NavItem>
              <NavItem $w={186} $icon={35.5}>
                <span><svg width="23" height="20" viewBox="0 0 23 20" fill="#7f7e99"><path d="M.7 0h19v3.800H.7zM3.200 8H22v4H3.200zM.7 16h19v4H.7z" /></svg></span>
                Orchestrations
              </NavItem>
              <NavItem $w={201} $icon={35}>
                <span><svg width="23" height="22" viewBox="0 0 23 22" fill="#7f7e99"><path d="M8 0h12q2.500 0 2.500 2.500V14q0 2.500-2.500 2.500h-1.500V7q0-3.500-3.500-3.500H5.500V2.500Q5.500 0 8 0Z" /><path fillRule="evenodd" d="M3 5h11.500q2.500 0 2.500 2.500v12q0 2.500-2.500 2.500H3Q.5 22 .5 19.500v-12Q.5 5 3 5Zm.5 3v2.500h10V8Z" /></svg></span>
                Transformations
              </NavItem>
              <NavItem $w={100} $icon={34.5}>
                <span><svg width="22" height="22" viewBox="0 0 22 22"><circle cx="11" cy="11" r="11" fill="#7f7e99" /><path d="M7.500 6.300 16 11l-8.500 4.700Z" fill="#fff" stroke="#fff" strokeWidth="1.200" strokeLinejoin="round" /></svg></span>
                Jobs
              </NavItem>
            </Nav>
            <Content>
              <TitleRow>
                <div><Crumb>Directory</Crumb><Title>Data Catalog</Title></div>
                <ShareButton>
                  <svg width="9" height="9" viewBox="0 0 9 9"><path d="M4.500 0v9M0 4.500h9" stroke="#fff" strokeWidth="1.500" /></svg><span>SHARE A BUCKET</span>
                </ShareButton>
              </TitleRow>
              <SearchBox><FaSearch size={16} /><span>SEARCH DATA CATALOG</span></SearchBox>
              <Tabs><PageTab $active>Shared with you</PageTab><PageTab>Shared from this project</PageTab></Tabs>
              <Card>
                <CardHead>
                  <BucketIcon><svg width="20" height="14" viewBox="0 0 20 14"><path d="M1.500.5h7l1.500 2h7.500q1.500 0 1.500 1.500v8.500q0 1.200-1.200 1.200H1.500Q.3 13.700.3 12.500v-10.700Q.3.500 1.500.5Z" fill="#fff" /></svg></BucketIcon>
                  <BucketName>c-sunken-data-temple<small>by Game Admin</small></BucketName>
                  <UseButton>USE THIS</UseButton>
                </CardHead>
                <About>About Data Bucket<p>No description available</p></About>
              </Card>
            </Content>
          </Page>
        </Win>
      </Workspace>

      <Highlight $x={429} $y={200} $w={178} $h={69} />
      <Highlight $x={590} $y={519} $w={139} $h={73} />
      <ArrowLayer width="160" height="250" viewBox="510 270 160 250">
        <path d="M522 276.500 645.500 488" stroke="#fe0000" strokeWidth="5.500" />
        <path d="M633 494 657 480 659 511.500Z" fill="#fe0000" />
      </ArrowLayer>
    </Desktop>
  );
}
